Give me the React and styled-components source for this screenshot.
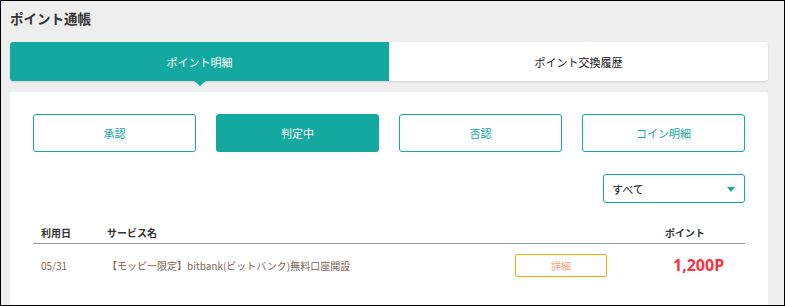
import React from "react";
import styled, { createGlobalStyle } from "styled-components";

const teal = "#14a9a0";

const GlobalStyle = createGlobalStyle`
  html, body {
    margin: 0;
    padding: 0;
  }
  body {
    font-family: "Noto Sans CJK JP", "Noto Sans", sans-serif;
  }
  * {
    box-sizing: border-box;
  }
`;

const Page = styled.div`
  width: 785px;
  height: 306px;
  overflow: hidden;
  border: 1px solid #000;
  background: #eeeeee;
  padding: 7px 16px 0 9px;
`;

const Title = styled.h1`
  margin: 0;
  font-size: 13.5px;
  line-height: 20px;
  font-weight: bold;
  color: #333;
`;

const Tabs = styled.div`
  display: flex;
  margin-top: 14px;
  height: 39px;
  border-radius: 3px;
  box-shadow: 0 1px 2px rgba(0, 0, 0, 0.12);
`;

const Tab = styled.div`
  position: relative;
  flex: 1;
  display: flex;
  align-items: center;
  justify-content: center;
  font-size: 11px;
  color: ${(p) => (p.$active ? "#fff" : "#222")};
  background: ${(p) => (p.$active ? teal : "#fff")};
  border-radius: ${(p) => (p.$first ? "3px 0 0 3px" : "0 3px 3px 0")};

  &::after {
    content: "";
    display: ${(p) => (p.$active ? "block" : "none")};
    position: absolute;
    left: 50%;
    bottom: -5px;
    transform: translateX(-50%);
    border-left: 6px solid transparent;
    border-right: 6px solid transparent;
    border-top: 5px solid ${teal};
  }
`;

const Panel = styled.section`
  margin-top: 11px;
  background: #fff;
  border-radius: 3px;
  padding: 22px 23px 30px;
  min-height: 220px;
`;

const FilterRow = styled.div`
  display: grid;
  grid-template-columns: repeat(4, 1fr);
  gap: 20px;
`;

const FilterButton = styled.button`
  height: 38px;
  border: 1px solid ${teal};
  border-radius: 3px;
  background: ${(p) => (p.$active ? teal : "#fff")};
  color: ${(p) => (p.$active ? "#fff" : teal)};
  font-family: inherit;
  font-size: 11px;
  padding: 0;
`;

const SelectRow = styled.div`
  display: flex;
  justify-content: flex-end;
  margin-top: 22px;
`;

const SelectBox = styled.div`
  width: 142px;
  height: 29px;
  border: 1px solid ${teal};
  border-radius: 3px;
  display: flex;
  align-items: center;
  justify-content: space-between;
  padding: 0 9px 0 8px;
  font-size: 11px;
  color: #111;
`;

const Caret = styled.span`
  width: 0;
  height: 0;
  border-left: 4px solid transparent;
  border-right: 4px solid transparent;
  border-top: 5px solid ${teal};
  margin-top: 2px;
`;

const Table = styled.div`
  margin-top: 18px;
`;

const Row = styled.div`
  display: grid;
  grid-template-columns: 74px 1fr 92px 138px;
  align-items: center;
  height: ${(p) => (p.$head ? "23px" : "42px")};
  border-bottom: ${(p) => (p.$head ? "1px solid #999" : "none")};
  font-size: 10px;
  font-weight: ${(p) => (p.$head ? "bold" : "normal")};
  color: ${(p) => (p.$head ? "#333" : "#7a6655")};
`;

const Cell = styled.div`
  padding-left: ${(p) => p.$pad || 0}px;
  white-space: nowrap;
`;

const DetailButton = styled.button`
  width: 92px;
  height: 23px;
  border: 1px solid #f6ab00;
  border-radius: 2px;
  background: #fff;
  color: #f7a07d;
  font-family: inherit;
  font-size: 10px;
  padding: 0;
`;

const Points = styled.div`
  padding-left: 66px;
  font-family: "Noto Sans", sans-serif;
  font-size: 16px;
  font-weight: bold;
  color: #ff3140;
`;

const filters = [
  { label: "承認" },
  { label: "判定中", active: true },
  { label: "否認" },
  { label: "コイン明細" },
];

export default function App() {
  return (
    <>
      <GlobalStyle />
      <Page>
        <Title>ポイント通帳</Title>
        <Tabs>
          <Tab $active $first>
            ポイント明細
          </Tab>
          <Tab>ポイント交換履歴</Tab>
        </Tabs>
        <Panel>
          <FilterRow>
            {filters.map((f) => (
              <FilterButton key={f.label} $active={f.active}>
                {f.label}
              </FilterButton>
            ))}
          </FilterRow>
          <SelectRow>
            <SelectBox>
              すべて
              <Caret />
            </SelectBox>
          </SelectRow>
          <Table>
            <Row $head>
              <Cell $pad={8}>利用日</Cell>
              <Cell>サービス名</Cell>
              <Cell />
              <Cell $pad={58}>ポイント</Cell>
            </Row>
            <Row>
              <Cell $pad={8}>05/31</Cell>
              <Cell>【モッピー限定】bitbank(ビットバンク)無料口座開設</Cell>
              <Cell>
                <DetailButton>詳細</DetailButton>
              </Cell>
              <Points>1,200P</Points>
            </Row>
          </Table>
        </Panel>
      </Page>
    </>
  );
}
